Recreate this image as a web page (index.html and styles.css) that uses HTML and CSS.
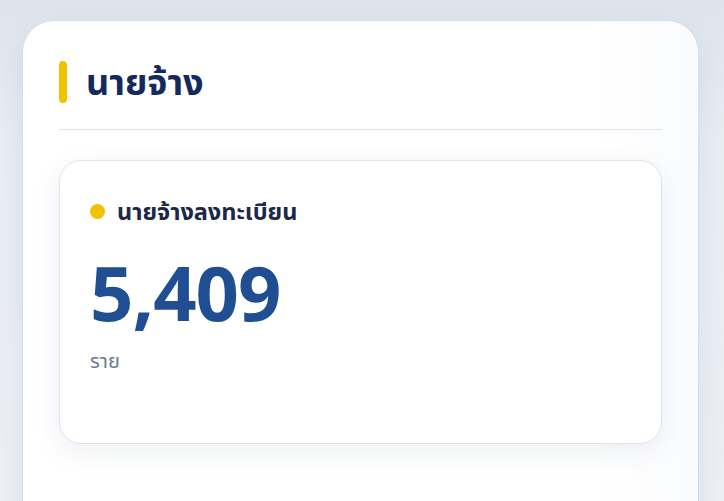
FILE: index.html
```html
<!DOCTYPE html>
<html lang="th">

<head>
  <meta charset="UTF-8" />
  <title>นายจ้าง</title>
  <link rel="stylesheet" href="styles.css">
</head>

<body>
  <div class="panel">
    <div class="panel-header">
      <span class="panel-bar"></span>
      <h2 class="panel-title">นายจ้าง</h2>
    </div>

    <div class="stat-card">
      <div class="stat-label">
        <span class="stat-dot"></span>
        <span>นายจ้างลงทะเบียน</span>
      </div>
      <div class="stat-value">5,409</div>
      <div class="stat-unit">ราย</div>
    </div>
  </div>
</body>

</html>
```

FILE: styles.css
```css
:root {
  --navy: #132a5e;
  --blue: #1f4e93;
  --yellow: #f0c200;
  --muted: #6c7a90;
  --line: #dde4ef;
  --card-border: #d3dff0;
}

* {
  box-sizing: border-box;
  margin: 0;
  padding: 0;
}

body {
  height: 100vh;
  overflow: hidden;
  padding: 20px 25px 0 22px;
  font-family: 'Noto Sans', 'Noto Sans Thai', sans-serif;
  background: linear-gradient(180deg, #dfe4ec 0%, #e9edf4 30%, #eceff5 100%);
}

.panel {
  height: 520px;
  background: linear-gradient(90deg, #ffffff 85%, #fafbfd 100%);
  border: 1px solid var(--card-border);
  border-radius: 32px;
  padding: 38px 36px 0;
  box-shadow: 0 10px 30px rgba(30, 50, 90, 0.08);
}

.panel-header {
  display: flex;
  align-items: center;
  gap: 19px;
  height: 71px;
  padding-bottom: 24px;
  border-bottom: 1px solid var(--line);
}

.panel-bar {
  width: 8px;
  height: 42px;
  border-radius: 4px;
  background-color: var(--yellow);
}

.panel-title {
  font-size: 36px;
  font-weight: 700;
  color: var(--navy);
  line-height: 46px;
}

.stat-card {
  margin-top: 30px;
  height: 284px;
  background-color: #ffffff;
  border: 1px solid var(--line);
  border-radius: 22px;
  padding: 36px 30px;
  box-shadow: 0 8px 28px rgba(30, 50, 90, 0.08);
}

.stat-label {
  display: flex;
  align-items: center;
  gap: 12px;
  font-size: 23.5px;
  font-weight: 700;
  color: #1c2946;
  line-height: 28px;
}

.stat-dot {
  width: 15px;
  height: 15px;
  border-radius: 50%;
  background-color: var(--yellow);
}

.stat-value {
  margin-top: 29px;
  font-size: 76px;
  font-weight: 700;
  line-height: 1;
  color: var(--blue);
  letter-spacing: -1px;
}

.stat-unit {
  margin-top: 17px;
  font-size: 20px;
  line-height: 27px;
  color: var(--muted);
}
```
